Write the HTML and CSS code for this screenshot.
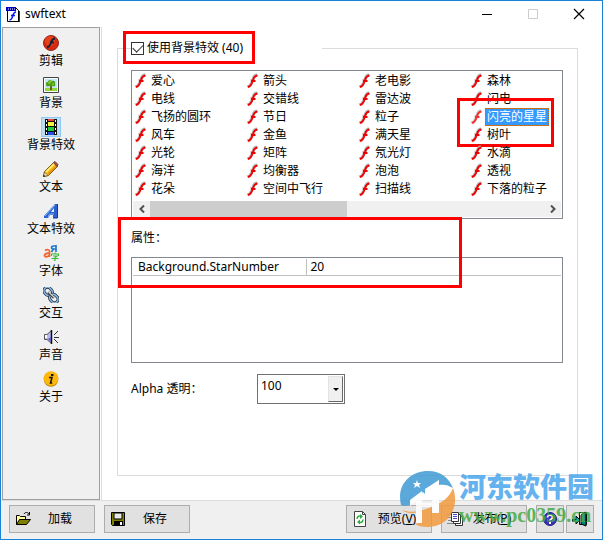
FILE: index.html
```html
<!DOCTYPE html>
<html lang="zh-CN">
<head>
  <meta charset="UTF-8" />
  <meta name="viewport" content="width=device-width, initial-scale=1.0" />
  <title>swftext</title>
  <link rel="stylesheet" href="styles.css">
</head>
<body>
  <svg class="defs" aria-hidden="true">
    <symbol id="flash" viewBox="0 0 16 16">
      <path d="M12 1.500C9 1.500 8.300 3.500 7.500 6L6.200 9.500C5.500 11.500 4.500 13 2 13.500M5.500 7h4" fill="none" stroke="#b4b4b4" stroke-width="2"/>
      <path d="M12.500 2.500C9.800 2.500 9 4.500 8.200 6.500L7 10C6.200 12 5 13.700 3 14M6 8h4.500" fill="none" stroke="#f00000" stroke-width="2"/>
    </symbol>
  </svg>

  <div class="window">
    <header class="titlebar">
      <svg class="icon" viewBox="0 0 16 16">
        <path d="M2.500 1.500h8l3 3v11h-11z" fill="#fff" stroke="#000"/>
        <path d="M1 1h10v4H1z" fill="#0000c0"/><path d="M3 3h1M5 3h1M7 3h1M9 3h1" stroke="#fff"/>
        <path d="M14 5v11H3" fill="none" stroke="#000" stroke-width="1.500"/>
        <path d="M11 6c-3 0-3 4-4 6-.5 1.200-1 2-2.500 2M6 9.500h4" fill="none" stroke="#0018ff" stroke-width="1.500"/>
      </svg>
      <h1>swftext</h1>
      <div class="window-buttons">
        <button aria-label="最小化"><svg viewBox="0 0 12 12"><path d="M1 6.500h10" stroke="#000"/></svg></button>
        <button aria-label="最大化" disabled><svg viewBox="0 0 12 12"><path d="M1.500 1.500h9v9h-9z" fill="none" stroke="#ccc"/></svg></button>
        <button aria-label="关闭"><svg viewBox="0 0 12 12"><path d="M1 1l10 10M11 1L1 11" stroke="#000" stroke-width="1.200"/></svg></button>
      </div>
    </header>

    <div class="body">
      <nav class="sidebar">
        <button><span class="pic"><svg viewBox="0 0 16 16">
          <circle cx="8" cy="8" r="7.500" fill="#d82a10" stroke="#8c2a20"/>
          <circle cx="7" cy="6" r="5" fill="#f04a1c" opacity=".7"/>
          <path d="M12 3.500C8.500 3.500 8.500 6.500 7.500 9c-.7 1.800-1.500 3-3.500 3.500M7 7.500h4" fill="none" stroke="#14243c" stroke-width="2"/>
        </svg></span>剪辑</button>
        <button><span class="pic"><svg viewBox="0 0 16 16">
          <path d="M.5.5h15v15H.5z" fill="#fff" stroke="#444"/><path d="M2 2h12v9H2z" fill="#bfe6fa"/>
          <path d="M2 11h12v3H2z" fill="#8ed83c"/><path d="M7 8h2v5H7z" fill="#7a5418"/>
          <path d="M3 7c0-2 1-2 2-2 0-2 3-3 4-1 2-1 4 1 3 3 1 1 0 3-2 2-2 1-3 0-4 0-2 1-3 0-3-2z" fill="#4ca018"/>
          <path d="M5 6h2V4h2M9 7h2" fill="none" stroke="#a4dc40"/>
        </svg></span>背景</button>
        <button class="active"><span class="pic"><svg viewBox="0 0 16 16">
          <path d="M2 0h12v16H2z" fill="#111"/>
          <path d="M5 0h6v2H5z" fill="#f04040"/><path d="M5 3h6v4H5z" fill="#f4f43c"/>
          <path d="M5 8h6v4H5z" fill="#20c83c"/><path d="M5 13h6v3H5z" fill="#2450e8"/>
          <path d="M3.500 1v15M12.500 1v15" stroke="#fff" stroke-dasharray="2 2"/>
        </svg></span>背景特效</button>
        <button><span class="pic"><svg viewBox="0 0 16 16">
          <path d="M.5 15.500l1-5 9-9 4 4-9 9z" fill="#f8c020" stroke="#806010"/>
          <path d="M3 11l8.500-8.500" stroke="#fff080" stroke-width="1.500"/><path d="M5 13l8.500-8" stroke="#e08a10" stroke-width="1.500"/>
          <path d="M10.500 1.500l1.500-1 3 3-1 2z" fill="#c84848" stroke="#604040"/>
          <path d="M.5 15.500l1-4.500 3.500 3.500z" fill="#f8ecc0" stroke="#705020" stroke-width=".7"/><path d="M.3 15.700l.4-2 1.600 1.600z" fill="#111"/>
        </svg></span>文本</button>
        <button><span class="pic"><svg viewBox="0 0 16 16">
          <path d="M1 13l11-12h3v14h-5v-3H7l-2 3H1z" fill="#2c60d0"/>
          <path d="M8 9l3-4v4z" fill="#e8f0ff"/><path d="M2 13L12 2M5 14l1.500-3H11" fill="none" stroke="#88b4f4"/>
          <path d="M14.500 1v14H10" fill="none" stroke="#18389c"/>
        </svg></span>文本特效</button>
        <button><span class="pic"><svg viewBox="0 0 16 16">
          <path d="M2 5.500c2-1.500 5-1 4.500 1.500V12M6.500 8C3 8 1.500 9 1.500 10.500 2 12.500 5 12 6.500 10" fill="none" stroke="#f06830" stroke-width="1.800"/>
          <path d="M13 0v7M13 1h-2.500C8 1 8 4 10.500 4H13M10.500 4L8.500 7" fill="none" stroke="#2078d0" stroke-width="1.700"/>
          <path d="M12 7.500v1.500M8.500 11V9h7v2M10 11h4l-2 1.500V16h-1.500M8.500 13.500h7" fill="none" stroke="#38b838" stroke-width="1.100"/>
        </svg></span>字体</button>
        <button><span class="pic"><svg viewBox="0 0 16 16">
          <g fill="none" transform="rotate(45 8 8)"><rect x="-1" y="4" width="9" height="7" rx="3.500" stroke="#203040" stroke-width="3"/>
          <rect x="-1" y="4" width="9" height="7" rx="3.500" stroke="#8cbce8" stroke-width="1.500"/>
          <rect x="8" y="5" width="9" height="7" rx="3.500" stroke="#203040" stroke-width="3"/>
          <rect x="8" y="5" width="9" height="7" rx="3.500" stroke="#8cbce8" stroke-width="1.500"/>
          <path d="M4 8h8" stroke="#444" stroke-width="2.500"/><path d="M4 7.500h8" stroke="#e8e8e8"/></g>
        </svg></span>交互</button>
        <button><span class="pic"><svg viewBox="0 0 16 16">
          <path d="M1.500 5.500H4L8.500 1.500v13L4 10.500H1.500z" fill="#b8b8f0" stroke="#555"/>
          <path d="M2 6h2v3H2z" fill="#fff"/><path d="M8.500 1v14" stroke="#111" stroke-width="1.500"/>
          <path d="M5 10l3 3V8z" fill="#6060c8"/><path d="M11 6l4-4M11 8.500h5M11 10l4 4" stroke="#333"/>
        </svg></span>声音</button>
        <button><span class="pic"><svg viewBox="0 0 16 16">
          <circle cx="8" cy="8.500" r="7.300" fill="#b88408"/><circle cx="8" cy="7.500" r="7.300" fill="#fcb80c"/>
          <path d="M8 3h2.500v2H8z" fill="#111"/><path d="M6 6.500h3L7.500 12h1.700" fill="none" stroke="#111" stroke-width="1.500"/>
        </svg></span>关于</button>
      </nav>

      <main class="content">
        <fieldset class="group">
          <legend>
            <label class="toggle"><input type="checkbox" checked>使用背景特效 (40)<span class="mark mark-toggle"></span></label>
          </legend>

          <div class="list">
            <ul class="effects">
              <li><svg><use href="#flash"/></svg><span>爱心</span></li>
              <li><svg><use href="#flash"/></svg><span>电线</span></li>
              <li><svg><use href="#flash"/></svg><span>飞扬的圆环</span></li>
              <li><svg><use href="#flash"/></svg><span>风车</span></li>
              <li><svg><use href="#flash"/></svg><span>光轮</span></li>
              <li><svg><use href="#flash"/></svg><span>海洋</span></li>
              <li><svg><use href="#flash"/></svg><span>花朵</span></li>
              <li><svg><use href="#flash"/></svg><span>箭头</span></li>
              <li><svg><use href="#flash"/></svg><span>交错线</span></li>
              <li><svg><use href="#flash"/></svg><span>节日</span></li>
              <li><svg><use href="#flash"/></svg><span>金鱼</span></li>
              <li><svg><use href="#flash"/></svg><span>矩阵</span></li>
              <li><svg><use href="#flash"/></svg><span>均衡器</span></li>
              <li><svg><use href="#flash"/></svg><span>空间中飞行</span></li>
              <li><svg><use href="#flash"/></svg><span>老电影</span></li>
              <li><svg><use href="#flash"/></svg><span>雷达波</span></li>
              <li><svg><use href="#flash"/></svg><span>粒子</span></li>
              <li><svg><use href="#flash"/></svg><span>满天星</span></li>
              <li><svg><use href="#flash"/></svg><span>氖光灯</span></li>
              <li><svg><use href="#flash"/></svg><span>泡泡</span></li>
              <li><svg><use href="#flash"/></svg><span>扫描线</span></li>
              <li><svg><use href="#flash"/></svg><span>森林</span></li>
              <li><svg><use href="#flash"/></svg><span>闪电</span></li>
              <li class="selected"><svg><use href="#flash"/></svg><span>闪亮的星星</span><i class="mark mark-item"></i></li>
              <li><svg><use href="#flash"/></svg><span>树叶</span></li>
              <li><svg><use href="#flash"/></svg><span>水滴</span></li>
              <li><svg><use href="#flash"/></svg><span>透视</span></li>
              <li><svg><use href="#flash"/></svg><span>下落的粒子</span></li>
            </ul>
            <div class="scrollbar">
              <button aria-label="向左"><svg viewBox="0 0 8 8"><path d="M6 .5L2.500 4 6 7.500" fill="none" stroke="#505050" stroke-width="2"/></svg></button>
              <div class="track"><div class="thumb"></div></div>
              <button aria-label="向右"><svg viewBox="0 0 8 8"><path d="M2 .5L5.500 4 2 7.500" fill="none" stroke="#505050" stroke-width="2"/></svg></button>
            </div>
          </div>

          <section class="props">
            <h2>属性：</h2>
            <div class="props-box">
              <table>
                <tr><th scope="row">Background.StarNumber</th><td>20</td></tr>
              </table>
            </div>
            <span class="mark mark-props"></span>
          </section>

          <div class="alpha">
            <label for="alpha">Alpha 透明：</label>
            <div class="combo">
              <select id="alpha"><option>100</option></select>
              <span class="drop"></span>
            </div>
          </div>
        </fieldset>
      </main>
    </div>

    <footer class="footer">
      <button class="btn"><svg viewBox="0 0 16 16">
        <path d="M1.500 13.500v-9h3l1 1h5v3" fill="#ffff90" stroke="#000"/><path d="M1.500 13.500l3-5h11l-4 5z" fill="#808000" stroke="#000"/>
        <path d="M9 3c1-2 4-2 5 0M14.500 1v3H12" fill="none" stroke="#000"/>
      </svg><span>加载</span></button>
      <button class="btn"><svg viewBox="0 0 16 16">
        <path d="M1.500 1.500h13v13h-12l-1-1z" fill="#808000" stroke="#000"/><path d="M4 2h8v6H4z" fill="#e8e8e8" stroke="#000"/>
        <path d="M4 10h9v4H4z" fill="#000"/><path d="M10 11h2v3h-2z" fill="#fff"/>
      </svg><span>保存</span></button>
      <button class="btn preview"><svg viewBox="0 0 16 16">
        <path d="M2.500.5h8l3 3v12h-11z" fill="#fff" stroke="#444"/><path d="M10.500.5v3h3" fill="none" stroke="#444"/>
        <path d="M5 8c0-3 3-3.500 4.500-2.500M11 8.500c0 3-3 3.500-4.500 2.500" fill="none" stroke="#30a840" stroke-width="1.400"/><path d="M8 3l3 2.500L8 8zM8 8.500L5 11l3 2.500z" fill="#30a840"/>
      </svg><span>预览(<u>V</u>)</span></button>
      <button class="btn"><svg viewBox="0 0 16 16">
        <path d="M0 3.500h4M0 6.500h4M1 9.500h5M0 12.500h8" stroke="#888"/>
        <path d="M8.500 5.500h7v9h-7z" fill="#fff" stroke="#333"/><path d="M6.500 3.500h7v9h-7z" fill="#fff" stroke="#333"/>
        <path d="M4.500 1.500h7v9h-7z" fill="#fff" stroke="#333"/><path d="M6 3.500h4M6 5.500h4M6 7.500h4" stroke="#4848d0"/>
      </svg><span>发布(<u>P</u>)</span></button>
      <button class="btn small" aria-label="帮助"><svg viewBox="0 0 16 16">
        <circle cx="8" cy="8" r="6.500" fill="#3830c0" stroke="#202080"/><path d="M5.500 6.500c0-3 5-3 5 0 0 1.500-2.500 1.500-2.500 3" fill="none" stroke="#fff" stroke-width="1.700"/><path d="M7 11h2v2H7z" fill="#fff"/>
      </svg></button>
      <button class="btn small exit" aria-label="退出"><svg viewBox="0 0 16 16">
        <path d="M7.500 1.500h7v12h-7z" fill="#fff" stroke="#000"/><path d="M9 4l5-3v14l-5-2z" fill="#008080" stroke="#000"/>
        <path d="M0 8.500h4V5l4 4-4 4v-3H0z" fill="#00b8a8" stroke="#000"/>
      </svg></button>
    </footer>

    <div class="watermark">
      <svg viewBox="0 0 58 58">
        <path d="M2 35C-3 14 12 1 29 1c13 0 21 7 25 17-5-3-9-4-14-3V10L26 19v5l-2-2-13 9v4c-4 1-7 1-9 0z" fill="#3f9bd5"/>
        <path d="M3 40c8 3 17 2 27-2 13-5 20-10 24-20 7 18-4 39-25 39-6 0-10-1-13-3 5-1 7-4 7-8v-5c-8 3-15 3-20-1z" fill="#f29a3e"/>
        <path d="M11 30l12-9v32h-6V32l-6 4zM27 20l13-10v33h-7V22l-6 4z" fill="#fff"/>
        <path d="M23 33h11v4H23z" fill="#fff"/>
        <path d="M18 10l1 3h3l-2 2 1 3-3-2-3 2 1-3-2-2h3z" fill="#fff"/>
      </svg>
      <div><strong>河东软件园</strong><span>www.pc0359.cn</span></div>
    </div>
  </div>
</body>
</html>
```

FILE: styles.css
```css
* { box-sizing: border-box; }
body { margin: 0; font-family: "Noto Sans", "Noto Sans CJK SC", sans-serif; font-size: 12px; line-height: 16px; color: #000; background: #f0f0f0; }
button { font: inherit; color: inherit; padding: 0; border: 0; background: none; }
.defs { position: absolute; width: 0; height: 0; }
.window { position: relative; min-height: 100vh; display: flex; flex-direction: column; border: 1px solid #1883d7; }

.titlebar { display: flex; align-items: center; height: 26px; padding-left: 4px; background: #fff; }
.titlebar .icon { width: 16px; height: 16px; }
.titlebar h1 { margin: 0 auto 0 4px; font-size: 12px; font-weight: normal; }
.window-buttons { display: flex; }
.window-buttons button { width: 46px; height: 26px; display: flex; align-items: center; justify-content: center; }
.window-buttons svg { width: 12px; height: 12px; }

.body { flex: 1; display: flex; background: #fff; }
.sidebar { flex: none; width: 98px; margin: 0 1px; padding-top: 5px; display: flex; flex-direction: column; align-items: center; background: #f0f0f0; border: 1px solid #a0a0a0; }
.sidebar button { height: 42px; display: flex; flex-direction: column; align-items: center; justify-content: flex-start; }
.pic { width: 20px; height: 20px; padding: 2px; }
.pic svg { display: block; width: 16px; height: 16px; }
.active .pic { background: #bcdcf4; outline: 1px solid #90c8f6; outline-offset: -1px; }

.content { flex: 1; min-width: 0; display: flex; padding: 13px 24px 24px 15px; border-left: 1px solid #dcdcdc; }
.group { flex: 1; min-width: 0; margin: 0; padding: 14px 14px 0 13px; border: 1px solid #dcdcdc; }
.group legend { width: 191px; padding: 0; }
.toggle { position: relative; display: flex; align-items: center; gap: 3px; width: fit-content; height: 16px; }
.toggle input { appearance: none; width: 13px; height: 13px; margin: 0; border: 1px solid #333; background: #fff; display: grid; place-items: center; }
.toggle input:checked::before { content: ""; width: 9px; height: 5px; margin-bottom: 3px; border: solid #333; border-width: 0 0 1px 1px; transform: rotate(-45deg); }

/* red call-out frames */
.mark { position: absolute; border: 3px solid #f00; pointer-events: none; }
.mark-toggle { inset: -9px -12px -8px -8px; }
.mark-item { left: -12px; top: -10px; width: 97px; height: 49px; }
.mark-props { left: -13px; top: -2px; width: 344px; height: 71px; max-width: 100%; }

.list { border: 1px solid #828790; padding: 1px; }
.effects { list-style: none; margin: 0; padding: 0 0 3px; display: grid; grid-auto-flow: column; grid-template-rows: repeat(7, 18px); grid-auto-columns: 112px; }
.effects li { position: relative; display: flex; align-items: center; white-space: nowrap; }
.effects svg { width: 16px; height: 16px; }
.effects span { padding: 1px 2px; }
.effects .selected span { color: #fff; background: #3399ff; outline: 1px dotted #c86c10; outline-offset: -1px; }
.selected svg { opacity: 0.8; }
.scrollbar { display: flex; height: 16px; background: #f0f0f0; }
.scrollbar button { width: 17px; display: flex; align-items: center; justify-content: center; }
.scrollbar svg { width: 8px; height: 8px; }
.track { flex: 1; }
.thumb { width: 50%; height: 100%; background: #cdcdcd; }

.props { position: relative; padding-top: 11px; }
.props h2 { margin: 0; font-size: 12px; font-weight: normal; }
.props-box { height: 106px; margin-top: 11px; padding: 1px; border: 1px solid #828790; }
.props table { width: 100%; border-collapse: collapse; }
.props th, .props td { height: 16px; padding: 0 4px; font-weight: normal; text-align: left; border-bottom: 1px solid #c0c0c0; }
.props th { width: 173px; padding-left: 5px; border-right: 1px solid #c0c0c0; }

.alpha { display: flex; align-items: center; margin-top: 11px; }
.alpha label { width: 126px; }
.combo { position: relative; display: flex; }
.combo select { appearance: none; width: 88px; height: 30px; padding: 0 20px 6px 3px; font: inherit; color: #000; background: #fff; border: 1px solid #707070; border-radius: 0; }
.drop { position: absolute; top: 2px; right: 2px; bottom: 2px; width: 15px; display: grid; place-items: center; background: #f0f0f0; border: 1px solid #e3e3e3; border-right-color: #696969; border-bottom-color: #696969; pointer-events: none; }
.drop::before { content: ""; border: 3px solid transparent; border-top-color: #000; border-bottom: 0; }

.footer { display: flex; gap: 9px; padding: 4px 8px 6px; border-top: 1px solid #dcdcdc; background: #f0f0f0; }
.btn { width: 86px; height: 28px; padding: 0 5px; display: flex; align-items: center; background: #e1e1e1; border: 1px solid #adadad; }
.btn svg { flex: none; width: 16px; height: 16px; }
.btn span { flex: 1; text-align: center; }
.btn.preview { margin-left: auto; }
.btn.small { width: 28px; }
.btn.exit { margin-left: -7px; }

.watermark { position: absolute; right: 8px; bottom: 11px; display: flex; gap: 2px; opacity: 0.85; pointer-events: none; }
.watermark svg { width: 58px; height: 58px; }
.watermark div { display: flex; flex-direction: column; padding-top: 1px; }
.watermark strong { font-size: 27px; line-height: 32px; font-weight: 900; color: #4aa5ec; }
.watermark span { font-family: "Liberation Serif", serif; font-size: 20px; line-height: 24px; font-weight: bold; color: #46aa46; }
```
